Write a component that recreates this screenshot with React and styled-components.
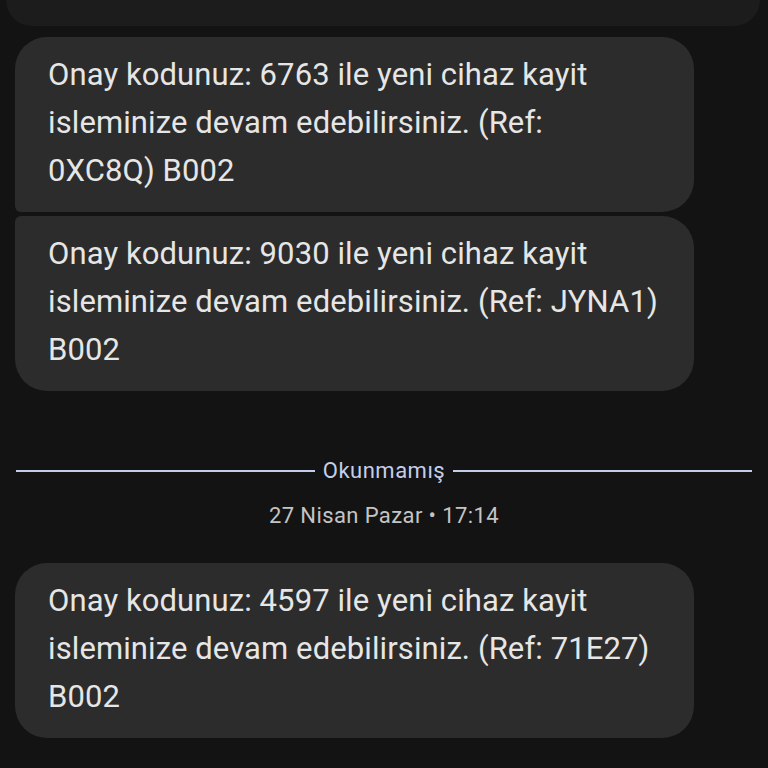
import React from "react";
import styled, { createGlobalStyle } from "styled-components";

const GlobalStyle = createGlobalStyle`
  html, body {
    margin: 0;
    padding: 0;
    background-color: #131313;
  }
  body {
    font-family: Roboto, "Noto Sans", Arial, sans-serif;
    -webkit-font-smoothing: antialiased;
  }
`;

const Screen = styled.div`
  width: 768px;
  height: 768px;
  overflow: hidden;
  background-color: #131313;
  display: flex;
  flex-direction: column;
`;

const PrevBubble = styled.div`
  height: 26px;
  margin: 0 8px 0 6px;
  background-color: #1c1c1c;
  border-radius: 0 0 34px 34px;
  flex-shrink: 0;
`;

const Group = styled.div`
  display: flex;
  flex-direction: column;
  gap: 4px;
  padding-left: 15px;
  margin-top: ${(p) => p.top}px;
`;

const Bubble = styled.div`
  width: 679px;
  box-sizing: border-box;
  padding: 14px 30px 17px 33px;
  background-color: #2c2c2c;
  color: #e6e6e6;
  font-size: 31px;
  line-height: 48px;
  letter-spacing: 0.1px;
  border-radius: ${(p) => (p.first ? "32px" : "6px")} 32px 32px
    ${(p) => (p.last ? "32px" : "6px")};
`;

const Divider = styled.div`
  display: flex;
  align-items: center;
  gap: 8px;
  padding: 0 16px;
  margin-top: 68px;
  color: #c3cfea;
  font-size: 22px;
  line-height: 24px;
  letter-spacing: 0.5px;
`;

const Line = styled.div`
  flex: 1;
  height: 2px;
  background-color: #c3cfea;
`;

const DateStamp = styled.div`
  margin-top: 20px;
  text-align: center;
  color: #c4c4c4;
  font-size: 22px;
  line-height: 26px;
  letter-spacing: 0.4px;
`;

const readMessages = [
  [
    "Onay kodunuz: 6763 ile yeni cihaz kayit",
    "isleminize devam edebilirsiniz. (Ref:",
    "0XC8Q) B002",
  ],
  [
    "Onay kodunuz: 9030 ile yeni cihaz kayit",
    "isleminize devam edebilirsiniz. (Ref: JYNA1)",
    "B002",
  ],
];

const unreadMessage = [
  "Onay kodunuz: 4597 ile yeni cihaz kayit",
  "isleminize devam edebilirsiniz. (Ref: 71E27)",
  "B002",
];

const MessageText = ({ lines }) =>
  lines.map((l, i) => (
    <React.Fragment key={i}>
      {l}
      {i < lines.length - 1 && <br />}
    </React.Fragment>
  ));

const App = () => {
  return (
    <Screen>
      <GlobalStyle />
      <PrevBubble />
      <Group top={11}>
        {readMessages.map((m, i) => (
          <Bubble key={i} first={i === 0} last={i === readMessages.length - 1}>
            <MessageText lines={m} />
          </Bubble>
        ))}
      </Group>
      <Divider>
        <Line />
        Okunmamış
        <Line />
      </Divider>
      <DateStamp>27 Nisan Pazar • 17:14</DateStamp>
      <Group top={34}>
        <Bubble first last>
          <MessageText lines={unreadMessage} />
        </Bubble>
      </Group>
    </Screen>
  );
};

export default App;
